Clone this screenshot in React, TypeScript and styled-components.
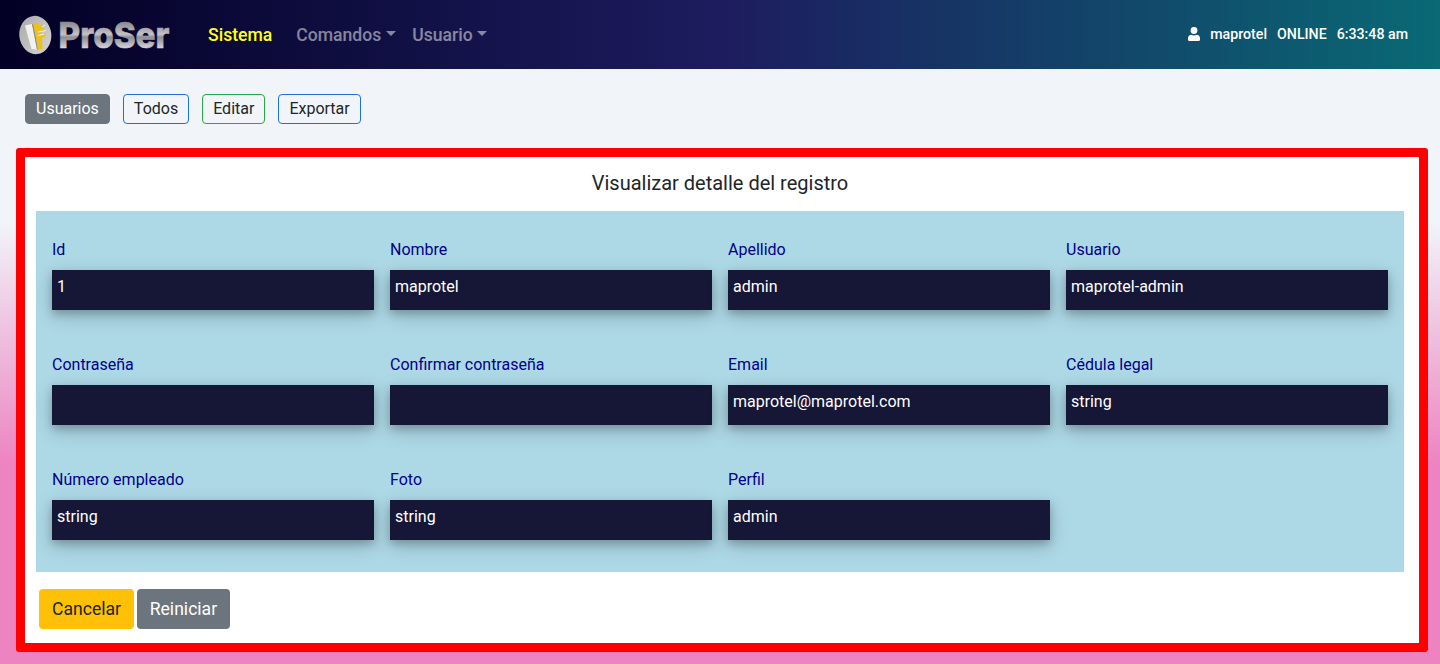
import React from "react";
import styled, { createGlobalStyle } from "styled-components";

const GlobalStyle = createGlobalStyle`
  *, *::before, *::after { box-sizing: border-box; }
  body {
    margin: 0;
    min-height: 664px;
    font-family: Roboto, sans-serif;
    font-size: 16px;
    line-height: 1.5;
    color: #212529;
    background: linear-gradient(to bottom, #f1f5f9 0, #f1f5f9 220px, #ed83c1 465px, #ed83c1 100%) no-repeat;
  }
  button { font-family: inherit; }
`;

const Navbar = styled.header`
  display: flex;
  align-items: center;
  height: 69px;
  padding: 0 32px 0 18px;
  background: linear-gradient(90deg, #020024 0%, #1d1c5e 50%, #096974 100%);
`;

const Brand = styled.a`
  display: flex;
  flex: none;
  width: 160px;
  height: 56px;
  margin-right: 30px;
`;

const NavItem = styled.a<{ $active?: boolean; $gap: number }>`
  display: flex;
  align-items: center;
  margin-right: ${(p) => p.$gap}px;
  padding-top: 2px;
  font-size: 17.6px;
  font-weight: 500;
  color: ${(p) => (p.$active ? "#ffff1a" : "rgba(255, 255, 255, 0.5)")};
`;

const Caret = styled.span`
  margin: -4px 0 0 4.8px;
  border-top: 5.28px solid;
  border-left: 5.28px solid transparent;
  border-right: 5.28px solid transparent;
`;

const Session = styled.div`
  display: flex;
  align-items: center;
  gap: 10px;
  margin-left: auto;
  font-size: 14.2px;
  font-weight: 500;
  color: #fff;
`;

const Toolbar = styled.nav`
  display: flex;
  gap: 13px;
  padding: 25px 25px 24px;
`;

const ToolButton = styled.button<{ $border: string; $solid?: boolean }>`
  height: 30px;
  padding: 0 10px;
  border: 1px solid ${(p) => p.$border};
  border-radius: 4px;
  background: ${(p) => (p.$solid ? p.$border : "transparent")};
  color: ${(p) => (p.$solid ? "#fff" : "#212529")};
  font-size: 16px;
  line-height: 24px;
`;

const Card = styled.main`
  height: 504px;
  margin: 0 12px 0 16px;
  padding: 11px 15px 0 11px;
  border: 9px solid #ff0000;
  border-radius: 3px;
  background: #fff;
`;

const Title = styled.h1`
  height: 43px;
  margin: 0;
  font-size: 20px;
  font-weight: 400;
  line-height: 30px;
  text-align: center;
`;

const Fields = styled.section`
  display: grid;
  grid-template-columns: repeat(4, 1fr);
  grid-auto-rows: 75px;
  gap: 40px 16px;
  height: 361px;
  padding: 24px 16px;
  background: #add8e6;
`;

const Field = styled.div`
  padding-top: 3px;
`;

const Label = styled.div`
  height: 32px;
  color: #00008b;
`;

const Value = styled.div`
  height: 40px;
  padding: 5px;
  background: #161637;
  color: #fff;
  box-shadow: 0 4px 8px 0 rgba(0, 0, 0, 0.2), 0 6px 20px 0 rgba(0, 0, 0, 0.19);
`;

const Actions = styled.div`
  display: flex;
  gap: 3px;
  padding: 17px 3px 0;
`;

const ActionButton = styled.button<{ $tone: "warning" | "secondary" }>`
  height: 40px;
  padding: 0 12.6px 1px 13px;
  border: 0;
  border-radius: 4px;
  background: ${(p) => (p.$tone === "warning" ? "#ffc107" : "#6c757d")};
  color: ${(p) => (p.$tone === "warning" ? "#212529" : "#fff")};
  font-size: 17.6px;
`;

const Logo = () => (
  <svg width="160" height="56" viewBox="0 -7 160 56">
    <defs>
      <linearGradient id="metal" gradientUnits="userSpaceOnUse" x1="0" y1="7" x2="0" y2="36">
        <stop offset="0" stopColor="#85838b" />
        <stop offset="0.46" stopColor="#c4c2c8" />
        <stop offset="0.56" stopColor="#8e8c94" />
        <stop offset="1" stopColor="#e2e0e5" />
      </linearGradient>
      <linearGradient id="disc" x1="0" y1="0" x2="1" y2="1">
        <stop offset="0" stopColor="#a9a9ac" />
        <stop offset="1" stopColor="#d6d6d4" />
      </linearGradient>
    </defs>
    <ellipse cx="17.300" cy="21" rx="16" ry="19.200" fill="url(#disc)" transform="rotate(-6 17.3 21)" />
    <path d="M7 11.500 14 10 19 35.500 13.500 35Z" fill="#f1f1ef" />
    <path d="M14 10 15.500 10.500 20 35 19 35.500Z" fill="#89898b" />
    <path d="M15 9.500 26 11v5.500l-4 .5.500 3.500 4.500-.5v3l-3 .5.500 11.500-4.500.5-2-12Z" fill="#edc11b" />
    <path d="m20 18 8-1.500M20 21.500l6-1.500M24 13l3-2" stroke="#f4f4ea" strokeWidth="1" />
    <text x="40.500" y="33.700" textLength="111" lengthAdjust="spacingAndGlyphs" fontFamily="Inter, sans-serif" fontSize="35.500" fontWeight="800" fill="url(#metal)" stroke="url(#metal)" strokeWidth="0.600">ProSer</text>
  </svg>
);

const UserIcon = styled(({ className }: { className?: string }) => (
  <svg className={className} width="12" height="14" viewBox="0 0 12 14" fill="#fff">
    <circle cx="6" cy="3.500" r="3.400" />
    <path d="M3.500 7.800C1.300 8 0 9.300 0 11.300v1.200C0 13.400.5 14 1.400 14h9.200c.9 0 1.400-.6 1.400-1.500v-1.200c0-2-1.300-3.300-3.500-3.500-.7.400-1.500.7-2.500.7s-1.800-.3-2.500-.7Z" />
  </svg>
))`
  margin-bottom: 1px;
`;

const fields = [
  ["Id", "1"],
  ["Nombre", "maprotel"],
  ["Apellido", "admin"],
  ["Usuario", "maprotel-admin"],
  ["Contraseña", ""],
  ["Confirmar contraseña", ""],
  ["Email", "maprotel@maprotel.com"],
  ["Cédula legal", "string"],
  ["Número empleado", "string"],
  ["Foto", "string"],
  ["Perfil", "admin"],
];

export default function App() {
  return (
    <>
      <GlobalStyle />
      <Navbar>
        <Brand><Logo /></Brand>
        <NavItem $active $gap={24}>Sistema</NavItem>
        <NavItem $gap={16}>Comandos<Caret /></NavItem>
        <NavItem $gap={0}>Usuario<Caret /></NavItem>
        <Session>
          <UserIcon />
          <span>maprotel</span>
          <span>ONLINE</span>
          <span>6:33:48 am</span>
        </Session>
      </Navbar>
      <Toolbar>
        <ToolButton $border="#6c757d" $solid>Usuarios</ToolButton>
        <ToolButton $border="#1a73d9">Todos</ToolButton>
        <ToolButton $border="#28a745">Editar</ToolButton>
        <ToolButton $border="#1a73d9">Exportar</ToolButton>
      </Toolbar>
      <Card>
        <Title>Visualizar detalle del registro</Title>
        <Fields>
          {fields.map(([label, value]) => (
            <Field key={label}>
              <Label>{label}</Label>
              <Value>{value}</Value>
            </Field>
          ))}
        </Fields>
        <Actions>
          <ActionButton $tone="warning">Cancelar</ActionButton>
          <ActionButton $tone="secondary">Reiniciar</ActionButton>
        </Actions>
      </Card>
    </>
  );
}
